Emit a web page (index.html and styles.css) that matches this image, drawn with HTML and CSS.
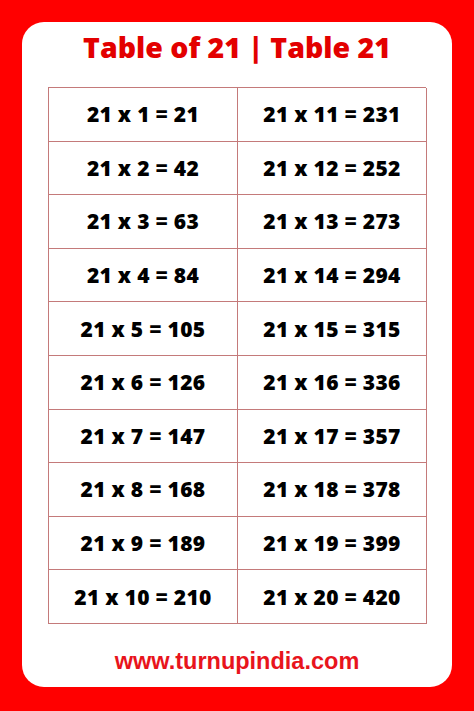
FILE: index.html
```html
<!DOCTYPE html>
<html>
<head>
<meta charset="utf-8">
<link rel="stylesheet" href="styles.css">
</head>
<body>
<div class="card">
  <h1 class="title">Table of 21 | Table 21</h1>
  <div class="table">
    <div class="cell">21 x 1 = 21</div><div class="cell">21 x 11 = 231</div>
    <div class="cell">21 x 2 = 42</div><div class="cell">21 x 12 = 252</div>
    <div class="cell">21 x 3 = 63</div><div class="cell">21 x 13 = 273</div>
    <div class="cell">21 x 4 = 84</div><div class="cell">21 x 14 = 294</div>
    <div class="cell">21 x 5 = 105</div><div class="cell">21 x 15 = 315</div>
    <div class="cell">21 x 6 = 126</div><div class="cell">21 x 16 = 336</div>
    <div class="cell">21 x 7 = 147</div><div class="cell">21 x 17 = 357</div>
    <div class="cell">21 x 8 = 168</div><div class="cell">21 x 18 = 378</div>
    <div class="cell">21 x 9 = 189</div><div class="cell">21 x 19 = 399</div>
    <div class="cell">21 x 10 = 210</div><div class="cell">21 x 20 = 420</div>
  </div>
  <div class="footer">www.turnupindia.com</div>
</div>
</body>
</html>
```
FILE: styles.css
```css
html, body {
  margin: 0;
  padding: 0;
  background: #ff0000;
}
body {
  width: 474px;
  height: 711px;
  padding: 22px;
  box-sizing: border-box;
  font-family: "Open Sans", "Liberation Sans", sans-serif;
}
.card {
  width: 430px;
  height: 665px;
  background: #ffffff;
  border-radius: 22px;
  box-sizing: border-box;
  padding: 6px 26px 0 26px;
  display: flex;
  flex-direction: column;
}
.title {
  margin: 0;
  height: 59px;
  line-height: 38px;
  font-size: 28.5px;
  font-weight: 800;
  color: #e30000;
  text-align: center;
}
.table {
  display: grid;
  grid-template-columns: 189px 189px;
  grid-auto-rows: 53.6px;
  border-top: 1px solid #c47a7a;
  border-left: 1px solid #c47a7a;
}
.cell {
  border-right: 1px solid #c47a7a;
  border-bottom: 1px solid #c47a7a;
  display: flex;
  align-items: center;
  justify-content: center;
  font-size: 21px;
  font-weight: 800;
  letter-spacing: 0.3px;
  color: #000;
}
.footer {
  text-align: center;
  margin-top: 24px;
  font-size: 23.5px;
  font-weight: 700;
  color: #e8141c;
  font-family: "Liberation Sans", Arial, sans-serif;
}
```
